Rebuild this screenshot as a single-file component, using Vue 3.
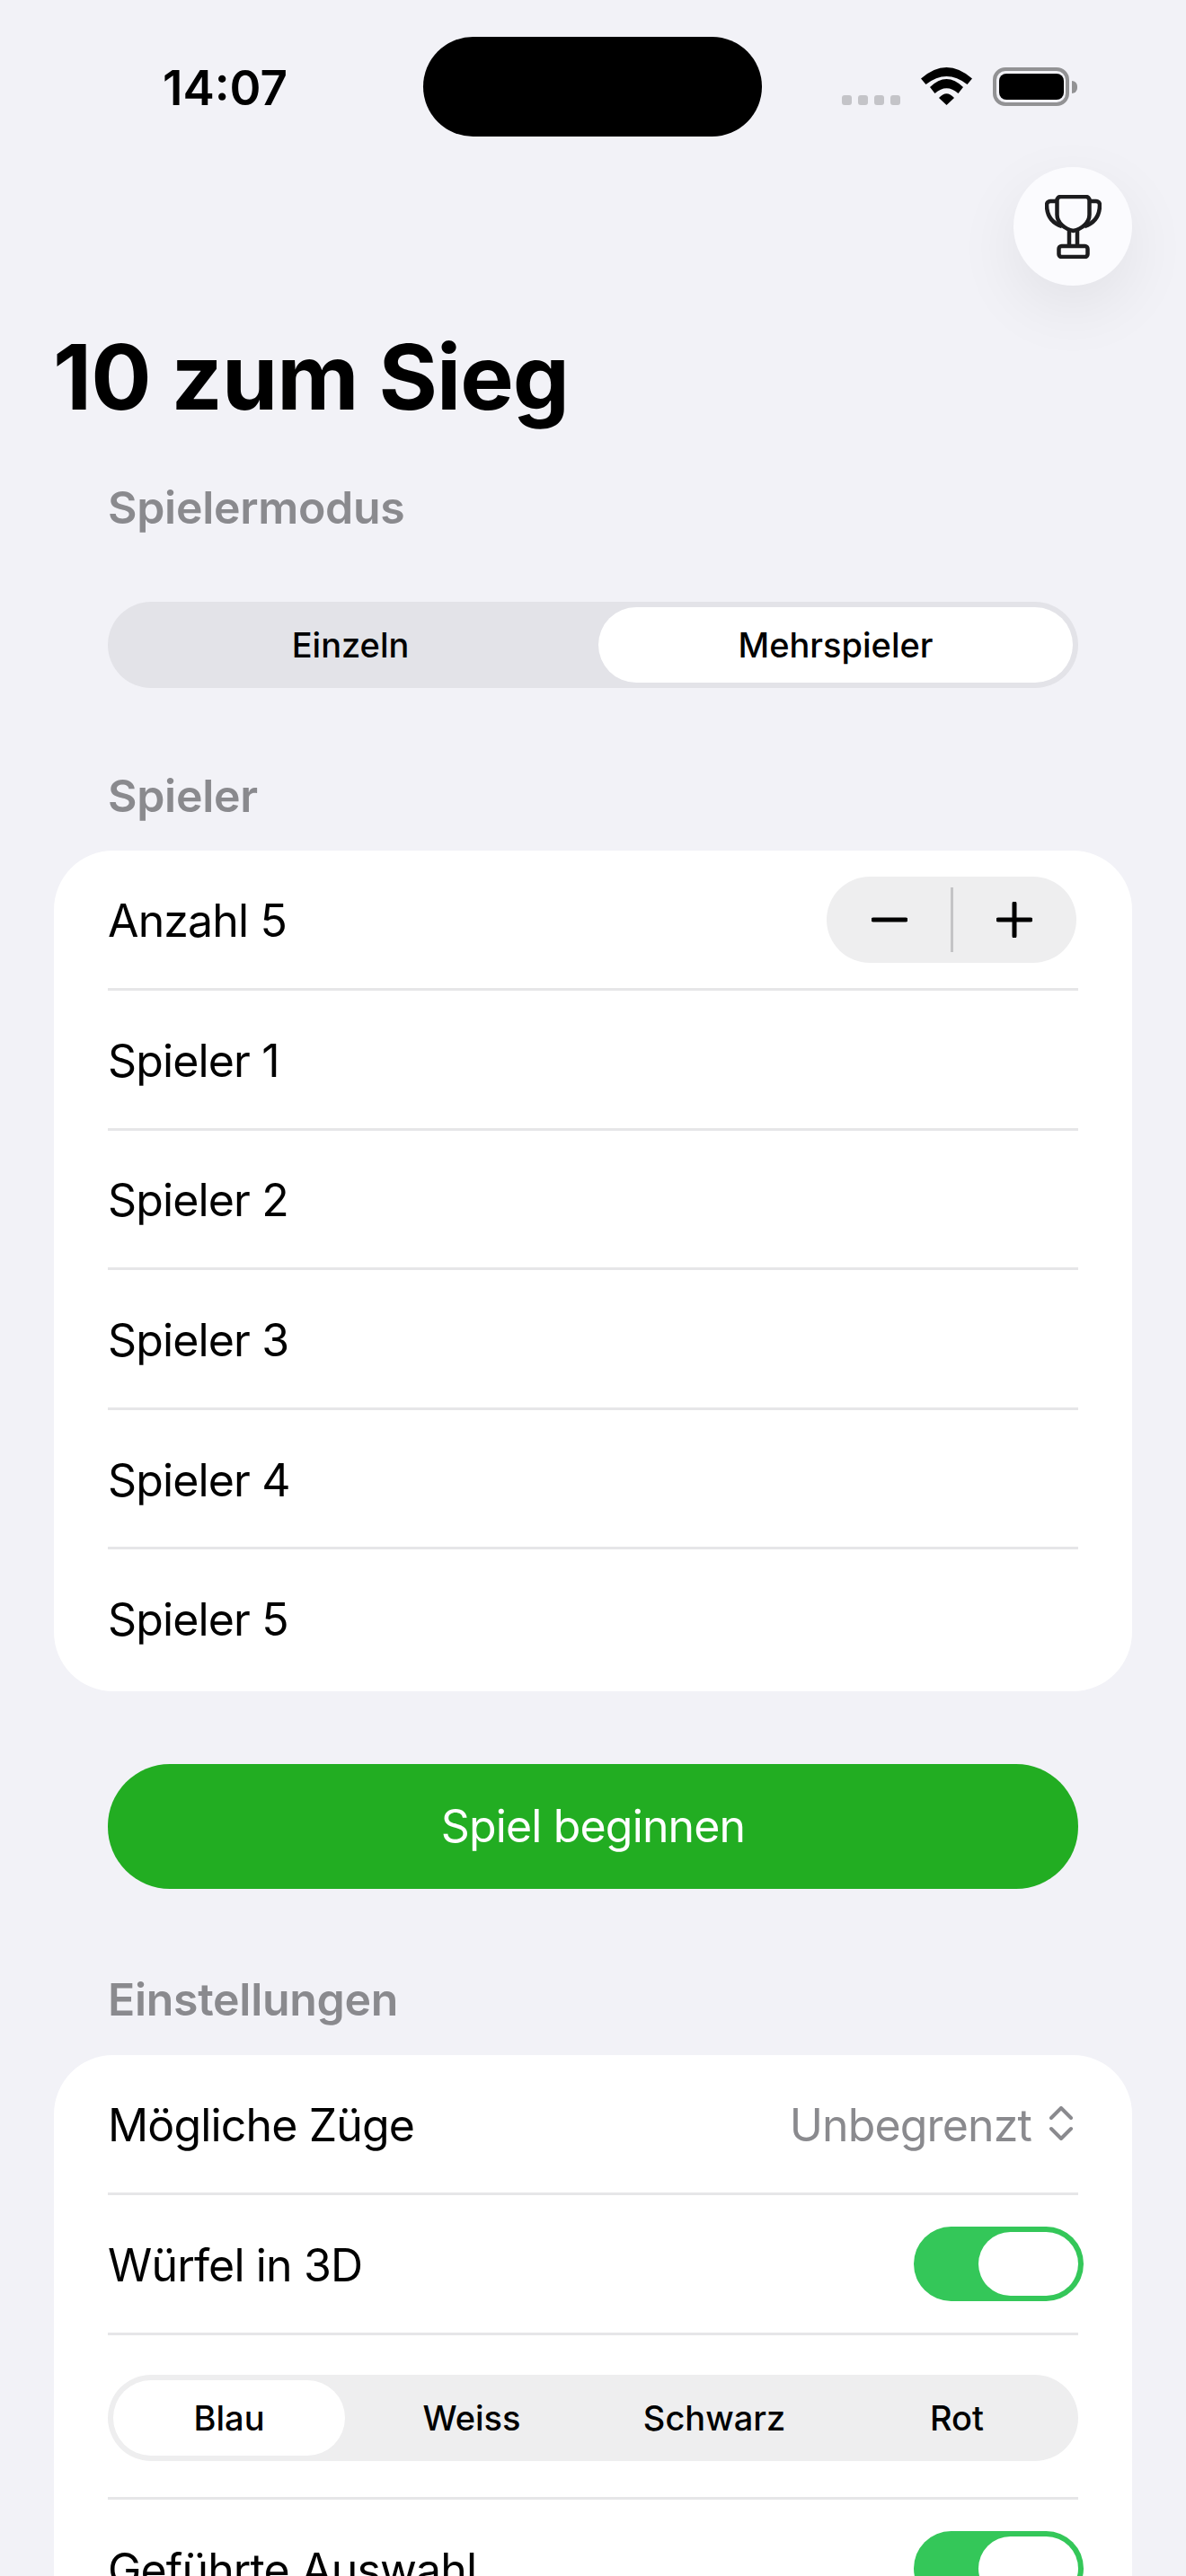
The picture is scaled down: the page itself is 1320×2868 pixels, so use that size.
<script setup>
const players = [1, 2, 3, 4, 5]
const colors = ['Blau', 'Weiss', 'Schwarz', 'Rot']
</script>

<template>
  <div class="page">
    <div class="status">
      <span class="time">14:07</span>
      <div class="island"></div>
      <div class="status-icons">
        <div class="signal">
          <i v-for="n in 4" :key="n"></i>
        </div>
        <svg class="wifi" width="57" height="42" viewBox="0 0 57 42">
          <path d="M0 12.5Q28.5-12.5 57 12.5L51.5 19Q28.5 1 5.5 19Z" />
          <path d="M10 22Q28.5 4 47 22L41.5 29Q28.5 17.6 15.5 29Z" />
          <path d="M20 34Q28.5 24.6 37 34L28.5 42Z" />
        </svg>
        <div class="battery"><div class="battery-fill"></div></div>
        <div class="battery-cap"></div>
      </div>
    </div>

    <div class="top-action">
      <button class="trophy">
        <svg width="63" height="71" viewBox="0 0 63 71" fill="none" stroke="#1c1c1e" stroke-width="4.5">
          <path d="M13.5 6a4 4 0 0 1 4-4H45.5a4 4 0 0 1 4 4V22C49.5 31 41 38 31.5 40C22 38 13.5 31 13.5 22Z" />
          <path d="M14 7H6a4 4 0 0 0-4 4C2 22 7 31 19 35" />
          <path d="M49 7H57a4 4 0 0 1 4 4C61 22 56 31 44 35" />
          <path d="M27 40V56M36 40V56" />
          <rect x="15.5" y="57" width="32" height="12" rx="3" />
        </svg>
      </button>
    </div>

    <h1>10 zum Sieg</h1>

    <div class="label mode-label">Spielermodus</div>
    <div class="segment mode">
      <div class="seg-item">Einzeln</div>
      <div class="seg-item selected">Mehrspieler</div>
    </div>

    <div class="label players-label">Spieler</div>
    <div class="card">
      <div class="row">
        <span class="row-text">Anzahl 5</span>
        <div class="stepper">
          <svg width="40" height="40" viewBox="0 0 40 40"><path d="M2 20H38" stroke="#000" stroke-width="5" stroke-linecap="round" /></svg>
          <div class="stepper-line"></div>
          <svg width="40" height="40" viewBox="0 0 40 40"><path d="M2 20H38M20 2V38" stroke="#000" stroke-width="5" stroke-linecap="round" /></svg>
        </div>
      </div>
      <div class="row" v-for="p in players" :key="p">
        <span class="row-text">Spieler {{ p }}</span>
      </div>
    </div>

    <button class="start">Spiel beginnen</button>

    <div class="label settings-label">Einstellungen</div>
    <div class="card">
      <div class="row">
        <span class="row-text">Mögliche Züge</span>
        <div class="picker">
          <span class="row-text">Unbegrenzt</span>
          <svg width="26" height="38" viewBox="0 0 26 38" fill="none" stroke="#8a8a8e" stroke-width="4" stroke-linecap="round" stroke-linejoin="round">
            <path d="M2 13L13 2L24 13M2 25L13 36L24 25" />
          </svg>
        </div>
      </div>
      <div class="row">
        <span class="row-text">Würfel in 3D</span>
        <div class="toggle"><div class="knob"></div></div>
      </div>
      <div class="row seg-row">
        <div class="segment colors">
          <div v-for="(c, i) in colors" :key="c" class="seg-item" :class="{ selected: i === 0 }">{{ c }}</div>
        </div>
      </div>
      <div class="row">
        <span class="row-text">Geführte Auswahl</span>
        <div class="toggle"><div class="knob"></div></div>
      </div>
    </div>
  </div>
</template>

<style scoped>
.page {
  height: 2868px;
  overflow: hidden;
  background: #f2f2f7;
  color: #000;
  font-family: Inter, "Liberation Sans", sans-serif;
}
.status {
  display: grid;
  grid-template-columns: 471px 377px 1fr;
  padding-top: 41px;
  height: 111px;
}
.time {
  margin-left: 181px;
  margin-top: 27px;
  font-size: 53px;
  line-height: 60px;
  font-weight: 600;
  letter-spacing: 0;
}
.island {
  height: 111px;
  background: #000;
  border-radius: 56px;
}
.status-icons {
  display: flex;
  align-items: flex-start;
  margin-left: 89px;
  padding-top: 34px;
}
.signal {
  display: flex;
  gap: 7px;
  margin-top: 31px;
}
.signal i {
  width: 11px;
  height: 11px;
  border-radius: 3px;
  background: #c4c4c8;
}
.wifi {
  margin-left: 23px;
  fill: #000;
}
.battery {
  display: flex;
  align-items: center;
  justify-content: center;
  box-sizing: border-box;
  width: 85px;
  height: 43px;
  margin-left: 23px;
  border: 4px solid #929294;
  border-radius: 14px;
}
.battery-fill {
  flex: none;
  width: 72px;
  height: 29px;
  background: #000;
  border-radius: 8px;
}
.battery-cap {
  width: 6px;
  height: 14px;
  margin: 15px 0 0 3px;
  background: #929294;
  border-radius: 0 7px 7px 0;
}
.top-action {
  display: flex;
  justify-content: flex-end;
  padding: 34px 60px 0 0;
}
.trophy {
  display: flex;
  align-items: center;
  justify-content: center;
  width: 132px;
  height: 132px;
  padding: 0;
  border: none;
  border-radius: 50%;
  background: #fbfbfe;
  box-shadow: 0 24px 72px rgba(0, 0, 0, 0.07);
}
h1 {
  margin: 42px 0 0 59px;
  font-size: 100px;
  line-height: 120px;
  font-weight: 700;
  letter-spacing: -0.9px;
}
.label {
  margin-left: 120px;
  font-size: 50px;
  line-height: 60px;
  font-weight: 600;
  letter-spacing: -0.3px;
  color: #8a8a8e;
}
.mode-label {
  margin-top: 55px;
}
.players-label {
  margin-top: 90px;
  margin-bottom: 31px;
}
.settings-label {
  margin-top: 93px;
  margin-bottom: 32px;
}
.segment {
  display: grid;
  box-sizing: border-box;
  height: 96px;
  border-radius: 48px;
}
.mode {
  grid-template-columns: 1fr 1fr;
  margin: 75px 120px 0;
  background: #e3e3e8;
}
.colors {
  grid-template-columns: repeat(4, 1fr);
  width: 100%;
  background: #eeeeef;
}
.seg-item {
  display: flex;
  align-items: center;
  justify-content: center;
  margin: 6px;
  font-size: 38px;
  font-weight: 450;
  letter-spacing: 0;
  border-radius: 42px;
}
.seg-item.selected {
  background: #fff;
  font-weight: 550;
}
.card {
  margin: 0 60px;
  padding: 0 60px 5px;
  background: #fff;
  border-radius: 66px;
}
.row {
  display: flex;
  align-items: center;
  justify-content: space-between;
  height: 152.6px;
  font-size: 50px;
  letter-spacing: -0.85px;
  border-top: 3px solid #e6e6e8;
}
.row:first-child {
  height: 153px;
  border-top: none;
}
.row-text {
  padding-top: 3px;
}
.seg-row {
  height: 176.4px;
  padding: 4px 0 0;
}
.stepper {
  display: flex;
  align-items: center;
  justify-content: center;
  gap: 48px;
  width: 278px;
  height: 96px;
  margin-right: 2px;
  border-radius: 48px;
  background: #eeeeef;
}
.stepper-line {
  width: 3px;
  height: 72px;
  background: #c4c4c6;
}
.start {
  display: block;
  width: 1080px;
  height: 139px;
  margin: 81px 120px 0;
  border: none;
  border-radius: 69px;
  background: #22ad22;
  color: #fff;
  font-family: inherit;
  font-size: 50px;
  letter-spacing: -0.85px;
}
.picker {
  display: flex;
  align-items: center;
  gap: 20px;
  margin-right: 6px;
  color: #8a8a8e;
}
.toggle {
  display: flex;
  align-items: center;
  justify-content: flex-end;
  box-sizing: border-box;
  width: 189px;
  height: 83px;
  margin-right: -6px;
  padding-right: 6px;
  background: #34c759;
  border-radius: 42px;
}
.knob {
  width: 111px;
  height: 71px;
  background: #fff;
  border-radius: 36px;
}
</style>
